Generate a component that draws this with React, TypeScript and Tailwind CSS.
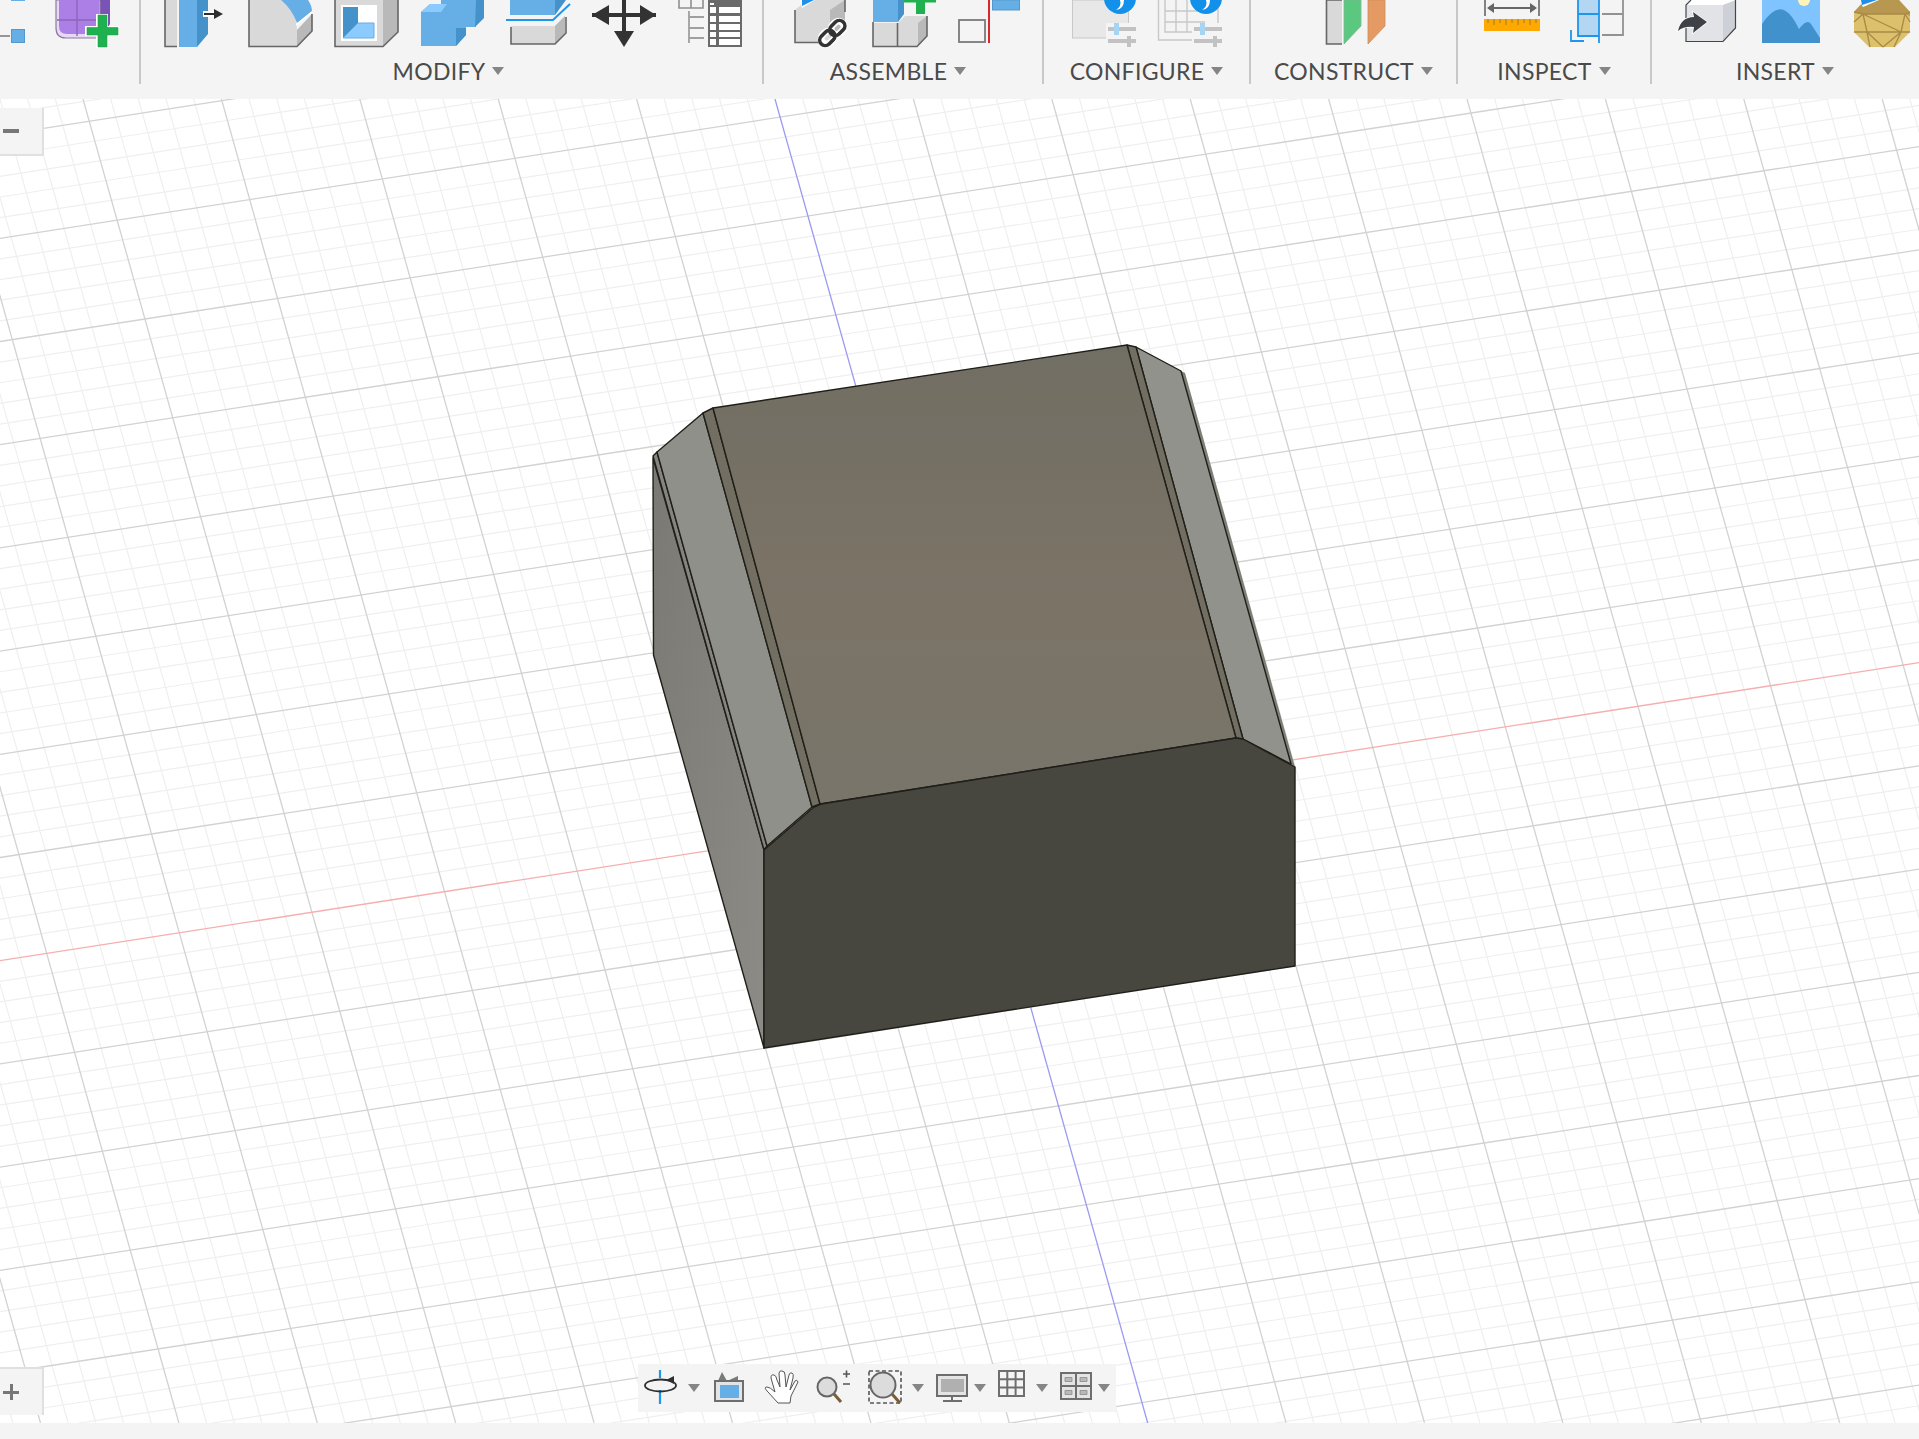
import type { ReactNode } from "react";

const toolFill = { blue: "#66aee6", blueDark: "#4592ca", blueLight: "#8ccbff", grey: "#d9d9d9", side: "#b9b9b9", line: "#666666" };

// Tool icons are drawn in page coordinates, the viewBox picks the slot out of them
function Tool({ x, children }: { x: number; children: ReactNode }) {
    return (
        <svg viewBox={`${x} 0 66 48`} className="block w-[66px] h-[48px] shrink-0">
            {children}
        </svg>
    );
}

function NavIcon({ x, w, className, children }: { x: number; w: number; className?: string; children: ReactNode }) {
    return (
        <svg viewBox={`${x} 1364 ${w} 48`} width={w} height={48} className={`block shrink-0 ${className ?? ""}`}>
            {children}
        </svg>
    );
}

function Caret({ className }: { className?: string }) {
    return (
        <svg viewBox="0 0 12 8" className={`block w-3 h-2 shrink-0 ${className ?? ""}`}>
            <path d="M0 0H12L6 8Z" fill="#858585" />
        </svg>
    );
}

function ToolGroup({ width, pad, label, labelPad, last, children }: { width: string; pad: string; label?: string; labelPad?: string; last?: boolean; children: ReactNode }) {
    return (
        <div className={`${width} h-[84px] shrink-0 overflow-hidden ${last ? "" : "border-r-2 border-[#c8c8c8]"}`}>
            <div className={`flex h-[48px] gap-[20px] ${pad}`}>{children}</div>
            {label && (
                <div className={`flex items-center justify-center gap-[7px] h-[26px] mt-[10px] ${labelPad ?? ""}`}>
                    <span className="text-[23px] leading-[26px] tracking-[0.3px] text-[#4a4a4a] font-['Lato',sans-serif]">{label}</span>
                    <Caret />
                </div>
            )}
        </div>
    );
}

function Toolbar() {
    const f = toolFill;
    return (
        <div className="flex h-[99px] shrink-0 bg-[#f4f4f4] overflow-hidden">
            <ToolGroup width="w-[141px]" pad="ml-[-33px]">
                <Tool x={-33}>
                    <rect x={11} y={-4} width={14} height={5} fill={f.blue} />
                    <path d="M0 36H10" stroke="#777" strokeWidth={1.5} />
                    <rect x={11.5} y={29.5} width={13} height={13} fill={f.blue} stroke="#5599cc" />
                </Tool>
                <Tool x={53}>
                    <path d="M100 0H110V24L104 34H100Z" fill="#7b52b8" />
                    <path d="M56 0V28Q56 38 66 38H100V0Z" fill="#e6d8f6" stroke="#8c7a9c" strokeWidth={1.2} />
                    <path d="M59 0V26Q59 34 67 34H99V0Z" fill="#ab7fe6" />
                    <path d="M77 0V36M57 20H100" stroke="#8a66b8" strokeWidth={1.4} />
                    <path d="M85 26H96V14H108V26H119V36H108V48H96V36H85Z" fill="#fff" />
                    <path d="M87 27.5H98V15H107V27.5H118V35H107V47H98V35H87Z" fill="#1fb14f" stroke="#2a9a50" strokeWidth={0.6} />
                </Tool>
            </ToolGroup>

            <ToolGroup width="w-[623px]" pad="pl-[20px]" label="MODIFY" labelPad="pr-[6px]">
                <Tool x={161}>
                    <path d="M165 0V46H177V0Z" fill={f.grey} />
                    <path d="M165 0V46.5H177" fill="none" stroke={f.line} strokeWidth={1.6} />
                    <rect x={179} y={0} width={18} height={47} fill={f.blue} />
                    <path d="M197 0H208V34L197 47Z" fill={f.blueDark} />
                    <rect x={203} y={11} width={12} height={6} fill="#fff" />
                    <path d="M204 14H216" stroke="#2e2e2e" strokeWidth={2} />
                    <path d="M214 9L223 14L214 19Z" fill="#2e2e2e" />
                </Tool>
                <Tool x={247}>
                    <path d="M249 0H281Q296 8 297 30L297 46H249Z" fill={f.grey} />
                    <path d="M297 30L312 14V31L297 46Z" fill={f.side} />
                    <path d="M249 0V46.5H297L312 31V14" fill="none" stroke={f.line} strokeWidth={1.6} />
                    <path d="M281 0H308Q312 6 312 11L297 23Q292 9 281 0Z" fill={f.blue} />
                    <path d="M296 25L312 12" stroke="#fff" strokeWidth={1.6} />
                </Tool>
                <Tool x={333}>
                    <rect x={335} y={0} width={48} height={46} fill={f.grey} />
                    <path d="M383 0H398V32L383 46Z" fill={f.side} />
                    <path d="M335 0V46.5H383L398 32V0" fill="none" stroke={f.line} strokeWidth={1.6} />
                    <rect x={341} y={5} width={36} height={36} fill="#fff" />
                    <rect x={343} y={7} width={15} height={31} fill={f.blueDark} />
                    <path d="M343 38L358 23H374V38Z" fill={f.blueLight} stroke={f.blue} />
                </Tool>
                <Tool x={419}>
                    <path d="M421 12L430 4H441V0H476V27H466V35L456 46H421Z" fill={f.blue} />
                    <path d="M421 12L430 4H447L441 12Z" fill={f.blueLight} />
                    <path d="M476 0H484V18L475 27ZM456 28H466V35L456 46Z" fill={f.blueDark} />
                </Tool>
                <Tool x={505}>
                    <rect x={510} y={0} width={45} height={15} fill={f.blue} />
                    <path d="M555 0H566L555 15Z" fill={f.blueDark} />
                    <path d="M506 20H553L570 4" fill="none" stroke="#1f96ee" strokeWidth={2} />
                    <path d="M511 26H555L565 16V33L555 44H511Z" fill={f.grey} />
                    <path d="M555 26L565 16V33L555 44Z" fill={f.side} />
                    <path d="M511 27V44H555L566 33V17" fill="none" stroke={f.line} strokeWidth={1.6} />
                </Tool>
                <Tool x={591}>
                    <path d="M592 15H656M624 0V36" stroke="#333" strokeWidth={4} />
                    <path d="M592 15L609 5V25ZM656 15L640 5V25ZM614 31H634L624 47Z" fill="#333" />
                </Tool>
                <Tool x={677}>
                    <path d="M679 0V8H703V0M691 0V8" fill="none" stroke="#8f8f8f" strokeWidth={1.6} />
                    <path d="M689 11V43M689 17H704M689 28H704M689 38H704" fill="none" stroke="#9f9f9f" strokeWidth={1.8} />
                    <rect x={708} y={0} width={34} height={47} fill="#6a6a6a" />
                    <path d="M710 7H716V13H710ZM719 7H740V13H719ZM710 16H716V22H710ZM719 16H740V22H719ZM710 24H716V30H710ZM719 24H740V30H719ZM710 32H716V37H710ZM719 32H740V37H719ZM710 39H716V45H710ZM719 39H740V45H719Z" fill="#fff" />
                    <rect x={710} y={3} width={4} height={2} fill="#fff" />
                </Tool>
            </ToolGroup>

            <ToolGroup width="w-[280px]" pad="pl-[21px]" label="ASSEMBLE" labelPad="pr-[10px]">
                <Tool x={785}>
                    <path d="M795 10L807 0H845V32L830 42H795Z" fill={f.grey} />
                    <path d="M830 10L845 0V32L830 42Z" fill={f.side} />
                    <path d="M795 10V42.5H820" fill="none" stroke={f.line} strokeWidth={1.6} />
                    <path d="M845 0V12" stroke={f.line} strokeWidth={1.6} />
                    <path d="M800 0H815L802 8Z" fill="#fff" />
                    <path d="M802 0H814L802 6Z" fill="#1f8fe8" />
                    <g fill="none" transform="rotate(-45 833 33)">
                        <rect x={819} y={27} width={14} height={11} rx={5.5} stroke="#fff" strokeWidth={7} />
                        <rect x={833} y={27} width={14} height={11} rx={5.5} stroke="#fff" strokeWidth={7} />
                        <rect x={817} y={27} width={17} height={11} rx={5.5} stroke="#333" strokeWidth={3.6} />
                        <rect x={831} y={27} width={17} height={11} rx={5.5} stroke="#333" strokeWidth={3.6} />
                    </g>
                </Tool>
                <Tool x={871}>
                    <rect x={873} y={0} width={25} height={22} fill={f.blue} />
                    <path d="M898 0H904V14L898 22Z" fill={f.blueDark} />
                    <rect x={873} y={23} width={24} height={23} fill={f.grey} />
                    <path d="M898 23L905 16H927V36L917 46H898Z" fill={f.grey} />
                    <path d="M918 23L927 16V36L918 46Z" fill={f.side} />
                    <path d="M873 22V46.5H917L927 36V16M897.5 23V46" fill="none" stroke={f.line} strokeWidth={1.6} />
                    <path d="M904 0H936V2.5H925V14H916V2.5H904Z" fill="#1fb14f" />
                </Tool>
                <Tool x={957}>
                    <rect x={959} y={20} width={26} height={22} fill="none" stroke="#7a7a7a" strokeWidth={1.8} />
                    <path d="M989 0V43" stroke="#d8282f" strokeWidth={2} />
                    <rect x={992.5} y={0} width={27} height={10} fill={f.blue} stroke="#5599cc" />
                </Tool>
            </ToolGroup>

            <ToolGroup width="w-[207px]" pad="pl-[27px]" label="CONFIGURE">
                <Tool x={1071}>
                    <rect x={1072.5} y={0} width={56} height={38} fill="#e8e8e8" stroke="#c8c8c8" />
                    <circle cx={1120} cy={-2} r={16} fill="#1390ea" />
                    <path d="M1120 0Q1122 6 1116 10Q1124 9 1124 0Z" fill="#fff" />
                    <path d="M1106 23H1138V47H1106Z" fill="#f4f4f4" />
                    <path d="M1108 29H1136M1108 41H1136" stroke="#c2c2c2" strokeWidth={4} />
                    <rect x={1114} y={23} width={5} height={12} fill="#a6d4f5" />
                    <rect x={1127} y={36} width={4} height={11} fill="#c2c2c2" />
                </Tool>
                <Tool x={1157}>
                    <path d="M1158.5 0V40H1210M1165 0V32H1218V0" fill="none" stroke="#c8c8c8" strokeWidth={1.4} />
                    <path d="M1176 0V32M1187 0V32M1165 11H1210M1165 22H1205" fill="none" stroke="#c8c8c8" strokeWidth={1.4} />
                    <circle cx={1206} cy={-2} r={16} fill="#1390ea" />
                    <path d="M1206 0Q1208 6 1202 10Q1210 9 1210 0Z" fill="#fff" />
                    <path d="M1192 23H1224V47H1192Z" fill="#f4f4f4" />
                    <path d="M1194 29H1222M1194 41H1222" stroke="#c2c2c2" strokeWidth={4} />
                    <rect x={1200} y={23} width={5} height={12} fill="#a6d4f5" />
                    <rect x={1213} y={36} width={4} height={11} fill="#c2c2c2" />
                </Tool>
            </ToolGroup>

            <ToolGroup width="w-[207px]" pad="pl-[71px]" label="CONSTRUCT">
                <Tool x={1322}>
                    <rect x={1326.5} y={0} width={15.5} height={44} fill={f.grey} />
                    <path d="M1326.5 0V44H1342M1326.5 0H1342" fill="none" stroke={f.line} strokeWidth={1.6} />
                    <path d="M1344 0H1361V26L1344 44Z" fill="#5bc87f" stroke="#7fb892" strokeWidth={0.8} />
                    <path d="M1368 0H1385V26L1368 44Z" fill="#e49a62" stroke="#cc8d60" strokeWidth={0.8} />
                </Tool>
            </ToolGroup>

            <ToolGroup width="w-[194px]" pad="pl-[20px]" label="INSPECT">
                <Tool x={1479}>
                    <path d="M1486 0V16M1540 0V16" stroke="#666" strokeWidth={1.6} />
                    <path d="M1490 8H1536" stroke="#666" strokeWidth={2} />
                    <path d="M1488 8L1495 3V13ZM1538 8L1531 3V13Z" fill="#666" />
                    <rect x={1485} y={19} width={56} height={12} fill="#ffa800" />
                    <path d="M1489 19V23M1495 19V25M1501 19V23M1507 19V25M1513 19V23M1519 19V25M1525 19V23M1531 19V25M1537 19V23" stroke="#a07a20" strokeWidth={1} />
                </Tool>
                <Tool x={1565}>
                    <rect x={1579} y={0} width={21} height={35} fill="#b3d6f2" />
                    <path d="M1603 14H1624M1603 35H1624M1624 0V36" fill="none" stroke="#929292" strokeWidth={1.8} />
                    <path d="M1579 0V36H1600M1579 14H1600M1600 0V43M1585 41H1572V30" fill="none" stroke="#1f96ee" strokeWidth={1.8} />
                </Tool>
            </ToolGroup>

            <ToolGroup width="w-[266px]" pad="pl-[22px]" label="INSERT" last>
                <Tool x={1675}>
                    <path d="M1687 5L1692 0H1737L1724 5Z" fill="#fff" />
                    <rect x={1687} y={5} width={37} height={36} fill="#e2e3e6" />
                    <path d="M1724 5L1737 0V28L1724 41Z" fill="#cdd0d6" />
                    <path d="M1692 0L1687 5V41.5H1724L1736.5 28V0" fill="none" stroke="#44464c" strokeWidth={1.2} />
                    <path d="M1708 22L1694 12L1695 17Q1682 17 1679 31Q1685 26 1695 27L1694 33Z" fill="#3f4148" stroke="#fff" strokeWidth={1.4} paintOrder="stroke" />
                </Tool>
                <Tool x={1761}>
                    <rect x={1763} y={0} width={58} height={43} fill="#7fc4ff" />
                    <path d="M1763 24Q1775 6 1785 10Q1793 14 1800 29Q1808 18 1812 24L1821 38V43H1763Z" fill="#4192cc" />
                    <circle cx={1805} cy={0} r={6} fill="#fff4b8" />
                </Tool>
                <Tool x={1847}>
                    <path d="M1855 12L1866 0H1900L1911 12V32L1896 47H1870L1855 32Z" fill="#dcc06c" />
                    <path d="M1866 0H1900L1911 12V16L1906 14H1864L1855 12Z" fill="#b89850" />
                    <path d="M1855 12L1864 14H1906L1911 12M1864 14L1868 32L1871 47M1906 14L1902 32L1895 47M1855 22L1864 14M1855 32L1868 32H1902L1911 32M1864 14L1902 32M1868 32L1884 47M1902 32L1884 47M1911 22L1906 14" fill="none" stroke="#a88a45" strokeWidth={1.3} />
                    <path d="M1860 0H1880L1864 7Z" fill="#fff" />
                    <path d="M1862 0H1878L1863 5Z" fill="#1f8fe8" />
                </Tool>
            </ToolGroup>
        </div>
    );
}

function NavBar() {
    return (
        <div className="absolute left-[638px] bottom-[11px] w-[478px] h-[48px] bg-[#f4f4f4] flex items-center pl-[6px]">
            <NavIcon x={644} w={33}>
                <path d="M660 1370V1378M660 1390V1404" stroke="#1f96ee" strokeWidth={2.2} />
                <ellipse cx={660.5} cy={1385.5} rx={15.5} ry={6} fill="none" stroke="#2e2e2e" strokeWidth={1.8} />
                <path d="M666 1380L674 1376V1384Z" fill="#2e2e2e" />
            </NavIcon>
            <Caret className="ml-[11px]" />
            <NavIcon x={714} w={30} className="ml-[14px]">
                <path d="M718 1381L722 1372L727 1381ZM727 1381L738 1376V1381Z" fill="#7a7a7a" />
                <rect x={715} y={1381} width={28} height={20} fill="#e4e4e4" stroke="#6e6e6e" strokeWidth={2} />
                <rect x={720} y={1385} width={19} height={13} fill="#66aee6" />
            </NavIcon>
            <NavIcon x={763} w={36} className="ml-[19px]">
                <path d="M778 1403L768 1392Q763 1387 767 1387Q770 1387 775 1392L771 1378Q771 1374 774 1375Q776 1375 777 1380L780 1387L779 1373Q780 1370 782 1371Q785 1371 785 1375L786 1387L789 1375Q790 1372 792 1373Q794 1374 793 1378L790 1390L795 1381Q797 1379 798 1382L791 1396L790 1403Z" fill="#fff" stroke="#555" strokeWidth={1} strokeLinejoin="round" />
            </NavIcon>
            <NavIcon x={815} w={38} className="ml-[16px]">
                <path d="M834 1394L841 1402" stroke="#7a5c36" strokeWidth={3} />
                <circle cx={827} cy={1387} r={9.5} fill="#dcdcdc" stroke="#666" strokeWidth={2} />
                <path d="M843 1374H850M846.5 1370.5V1377.5M843 1384H850" stroke="#555" strokeWidth={1.6} />
            </NavIcon>
            <NavIcon x={867} w={35} className="ml-[14px]">
                <rect x={869} y={1371} width={32} height={32} fill="none" stroke="#555" strokeWidth={1.6} strokeDasharray="4 2.5" />
                <path d="M892 1394L900 1403" stroke="#7a5c36" strokeWidth={3} />
                <circle cx={883} cy={1385} r={12.5} fill="#dcdcdc" stroke="#666" strokeWidth={2} />
            </NavIcon>
            <Caret className="ml-[10px]" />
            <NavIcon x={936} w={33} className="ml-[12px]">
                <rect x={937} y={1375} width={30} height={21} fill="#e4e4e4" stroke="#6e6e6e" strokeWidth={2} />
                <rect x={941} y={1379} width={23} height={13} fill="#b0b0b0" />
                <path d="M952 1397V1400M943 1401H962" stroke="#6e6e6e" strokeWidth={2} />
            </NavIcon>
            <Caret className="ml-[5px]" />
            <NavIcon x={998} w={28} className="ml-[12px]">
                <path d="M999 1371H1024V1396H999ZM1007.3 1371V1396M1015.6 1371V1396M999 1379.3H1024M999 1387.6H1024" fill="none" stroke="#6e6e6e" strokeWidth={2} />
            </NavIcon>
            <Caret className="ml-[10px]" />
            <NavIcon x={1060} w={32} className="ml-[12px]">
                <rect x={1061} y={1373} width={30} height={26} fill="#e4e4e4" stroke="#6e6e6e" strokeWidth={2} />
                <path d="M1076 1373V1399M1061 1386H1091" stroke="#6e6e6e" strokeWidth={2} />
                <path d="M1065 1377.5H1072V1381.5H1065ZM1080 1377.5H1087V1381.5H1080ZM1065 1390.5H1072V1394.5H1065ZM1080 1390.5H1087V1394.5H1080Z" fill="#b8b8b8" stroke="#8a8a8a" strokeWidth={0.8} />
            </NavIcon>
            <Caret className="ml-[6px]" />
        </div>
    );
}

// The view is orthographic, so both sets of grid lines stay parallel
const range = (from: number, to: number) => Array.from({ length: to - from + 1 }, (_, i) => from + i);
const isMajor = (n: number) => n % 5 === 0;

function gridAlongY(k: number) {
    return { x1: 775 + k * 27.68, y1: 99, x2: 775 + 0.2815 * 1324 + k * 27.68, y2: 1423 };
}

function gridAlongX(j: number) {
    return { x1: 0, y1: 960.7 + j * 20.64, x2: 1919, y2: 960.7 - 0.1553 * 1919 + j * 20.64 };
}

function Grid() {
    const ks = range(-45, 45);
    const js = range(-45, 40);
    return (
        <g fill="none">
            <g stroke="#efefef" strokeWidth={1.2}>
                {ks.filter((k) => !isMajor(k)).map((k) => <line key={k} {...gridAlongY(k)} />)}
                {js.filter((j) => !isMajor(j)).map((j) => <line key={j} {...gridAlongX(j)} />)}
            </g>
            <g stroke="#d2d2d2" strokeWidth={1.3}>
                {ks.filter((k) => isMajor(k) && k !== 0).map((k) => <line key={k} {...gridAlongY(k)} />)}
                {js.filter((j) => isMajor(j) && j !== 0).map((j) => <line key={j} {...gridAlongX(j)} />)}
            </g>
            <line {...gridAlongX(0)} stroke="#f7aeae" strokeWidth={1.3} />
            <line {...gridAlongY(0)} stroke="#9a9af2" strokeWidth={1.3} />
        </g>
    );
}

function Solid() {
    const edge = { stroke: "#1f1e18", strokeWidth: 1.4, strokeLinejoin: "round" as const };
    return (
        <g>
            <defs>
                <linearGradient id="topFace" x1="0" y1="0" x2="0" y2="1">
                    <stop offset="0" stopColor="#716e63" />
                    <stop offset="0.55" stopColor="#7b7366" />
                    <stop offset="1" stopColor="#79756a" />
                </linearGradient>
                <linearGradient id="sideFace" x1="0" y1="0" x2="1" y2="1">
                    <stop offset="0" stopColor="#7a7973" />
                    <stop offset="1" stopColor="#8c8b85" />
                </linearGradient>
            </defs>
            <polygon points="653,458 653.5,655 764,1048 764,850" fill="url(#sideFace)" {...edge} />
            <polygon points="653,456 657,452 767,846 764,850" fill="#85847d" {...edge} />
            <polygon points="657,452 703,413 812,807 767,846" fill="#90908a" {...edge} />
            <polygon points="703,413 713,408 820,804 812,807" fill="#726f62" {...edge} />
            <polygon points="1181,371 1185,373 1295,767 1291,764" fill="#7f7f77" />
            <polygon points="1136,347 1181,371 1291,764 1243,739" fill="#92928c" {...edge} />
            <polygon points="1127,345 1136,347 1243,739 1236,738" fill="#726f62" {...edge} />
            <polygon points="713,408 1127,345 1236,738 820,804" fill="url(#topFace)" {...edge} />
            <polygon points="764,850 814,807 821,804 1236,738 1243,739 1295,767 1295,966 764,1048" fill="#47463f" {...edge} />
        </g>
    );
}

export default function App() {
    return (
        <div className="flex flex-col h-[1439px] w-full overflow-hidden bg-[#f4f4f4]">
            <Toolbar />
            <div className="relative h-[1324px] shrink-0 bg-white overflow-hidden">
                <svg viewBox="0 99 1919 1324" className="block w-full h-full">
                    <Grid />
                    <Solid />
                </svg>

                <div className="absolute left-0 top-[9px] w-[44px] h-[48px] bg-[#f4f4f4] border-r-2 border-b-2 border-[#e0e0e0] flex items-center pl-[3px]">
                    <span className="block w-4 h-1 bg-[#777]" />
                </div>
                <div className="absolute left-0 top-[1268px] w-[44px] h-[48px] bg-[#f4f4f4] border-r-2 border-t-2 border-[#e0e0e0] flex items-center pl-[3px]">
                    <span className="relative block w-4 h-[3px] bg-[#777]">
                        <span className="absolute left-[6.5px] top-[-6.5px] w-[3px] h-4 bg-[#777]" />
                    </span>
                </div>

                <NavBar />
            </div>
            <div className="h-4 shrink-0 bg-[#f4f4f4]" />
        </div>
    );
}
